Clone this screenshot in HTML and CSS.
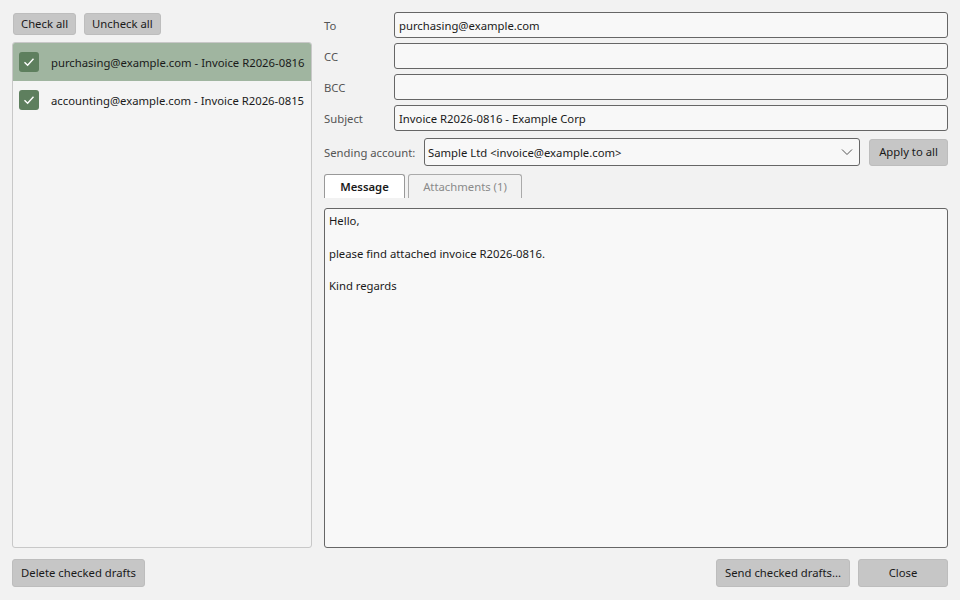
FILE: index.html
```html
<!DOCTYPE html>
<html lang="en">
<head>
    <meta charset="UTF-8">
    <title>Drafts</title>
    <link rel="stylesheet" href="styles.css">
</head>
<body>
    <div class="app">
        <div class="main">
            <div class="leftCol">
                <div class="toolbar">
                    <button class="btn">Check all</button>
                    <button class="btn">Uncheck all</button>
                </div>
                <div class="draftList">
                    <div class="draftRow selected">
                        <span class="chk"><svg width="14" height="14" viewBox="0 0 14 14"><path d="M2.5 7.3 L5.6 10.2 L11.5 3.8" fill="none" stroke="#fff" stroke-width="1.4"/></svg></span>
                        <span class="draftText">purchasing@example.com - Invoice R2026-0816</span>
                    </div>
                    <div class="draftRow">
                        <span class="chk"><svg width="14" height="14" viewBox="0 0 14 14"><path d="M2.5 7.3 L5.6 10.2 L11.5 3.8" fill="none" stroke="#fff" stroke-width="1.4"/></svg></span>
                        <span class="draftText">accounting@example.com - Invoice R2026-0815</span>
                    </div>
                </div>
            </div>
            <div class="rightCol">
                <div class="fields">
                    <label class="lbl">To</label>
                    <div class="field">purchasing@example.com</div>
                    <label class="lbl">CC</label>
                    <div class="field"></div>
                    <label class="lbl">BCC</label>
                    <div class="field"></div>
                    <label class="lbl">Subject</label>
                    <div class="field">Invoice R2026-0816 - Example Corp</div>
                </div>
                <div class="accountRow">
                    <label class="lbl accLbl">Sending account:</label>
                    <div class="select">
                        <span>Sample Ltd &lt;invoice@example.com&gt;</span>
                        <svg width="12" height="8" viewBox="0 0 12 8"><path d="M1 1.5 L6 6.5 L11 1.5" fill="none" stroke="#555" stroke-width="1"/></svg>
                    </div>
                    <button class="btn applyBtn">Apply to all</button>
                </div>
                <div class="tabs">
                    <div class="tab active">Message</div>
                    <div class="tab">Attachments (1)</div>
                </div>
                <div class="body">
                    <p>Hello,</p>
                    <p>please find attached invoice R2026-0816.</p>
                    <p>Kind regards</p>
                </div>
            </div>
        </div>
        <div class="footer">
            <button class="btn footBtn delBtn">Delete checked drafts</button>
            <div class="spacer"></div>
            <button class="btn footBtn sendBtn">Send checked drafts...</button>
            <button class="btn footBtn closeBtn">Close</button>
        </div>
    </div>
</body>
</html>
```
FILE: styles.css
```css
*{
    box-sizing: border-box;
}
body{
    margin: 0;
    background-color: #f2f2f2;
    font-family: "Noto Sans", "Open Sans", sans-serif;
    font-size: 11.3px;
    color: #1a1a1a;
}
.app{
    height: 600px;
    padding: 12px 12px 13px 12px;
    display: flex;
    flex-direction: column;
}
.main{
    flex: 1;
    display: flex;
    gap: 12px;
    min-height: 0;
}
.leftCol{
    width: 300px;
    display: flex;
    flex-direction: column;
}
.toolbar{
    display: flex;
    gap: 8px;
    margin-top: 1px;
    padding-left: 1px;
}
.btn{
    font-family: inherit;
    font-size: 11.3px;
    color: #1a1a1a;
    background-color: #c6c6c6;
    border: 1px solid #bdbdbd;
    border-radius: 3px;
    padding: 0 7px;
    height: 22px;
    line-height: 20px;
    white-space: nowrap;
}
.draftList{
    flex: 1;
    margin-top: 7px;
    border: 1px solid #c8c8c8;
    border-radius: 3px;
    background-color: #f4f4f4;
    overflow: hidden;
}
.draftRow{
    height: 38px;
    display: flex;
    align-items: center;
    padding-left: 6px;
    gap: 12px;
    white-space: nowrap;
}
.draftRow.selected{
    background-color: #a0b5a0;
}
.chk{
    width: 20px;
    height: 20px;
    border-radius: 3px;
    background-color: #5e7f5e;
    display: flex;
    align-items: center;
    justify-content: center;
    flex-shrink: 0;
}
.rightCol{
    flex: 1;
    display: flex;
    flex-direction: column;
}
.fields{
    display: grid;
    grid-template-columns: 70px 1fr;
    grid-auto-rows: 26px;
    row-gap: 5px;
}
.lbl{
    color: #555;
    display: flex;
    align-items: center;
}
.field{
    border: 1px solid #666;
    border-radius: 3px;
    background-color: #f8f8f8;
    padding: 0 4px;
    display: flex;
    align-items: center;
}
.accountRow{
    display: flex;
    align-items: center;
    margin-top: 7px;
    height: 28px;
}
.accLbl{
    width: 100px;
    height: 100%;
}
.select{
    flex: 1;
    height: 28px;
    border: 1px solid #666;
    border-radius: 3px;
    background-color: #f8f8f8;
    display: flex;
    align-items: center;
    justify-content: space-between;
    padding: 0 6px 0 3px;
}
.applyBtn{
    margin-left: 9px;
    height: 27px;
    width: 79px;
    padding: 0;
}
.tabs{
    display: flex;
    gap: 3px;
    margin-top: 8px;
    height: 24px;
}
.tab{
    border: 1px solid #aaa;
    border-bottom: none;
    border-radius: 3px 3px 0 0;
    display: flex;
    align-items: center;
    justify-content: center;
    color: #8a8a8a;
    width: 114px;
    white-space: nowrap;
}
.tab.active{
    background-color: #fff;
    border-color: #999;
    color: #1a1a1a;
    font-weight: 600;
    width: 81px;
}
.body{
    flex: 1;
    margin-top: 10px;
    border: 1px solid #666;
    border-radius: 3px;
    background-color: #f8f8f8;
    padding: 4px 4px;
}
.body p{
    margin: 0 0 16px 0;
    line-height: 16.5px;
}
.footer{
    display: flex;
    margin-top: 11px;
    height: 28px;
}
.footBtn{
    height: 28px;
}
.delBtn{
    width: 133px;
    padding: 0;
}
.spacer{
    flex: 1;
}
.sendBtn{
    width: 134px;
    padding: 0;
}
.closeBtn{
    margin-left: 8px;
    width: 90px;
}
```
